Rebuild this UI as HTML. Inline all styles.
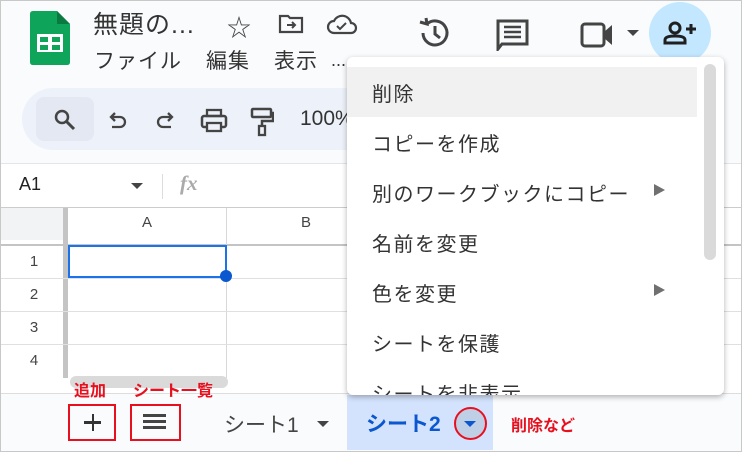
<!DOCTYPE html>
<html><head><meta charset="utf-8"><style>
*{margin:0;padding:0;box-sizing:border-box}
body{width:742px;height:452px;overflow:hidden;position:relative;background:#f9fbfd;font-family:"Liberation Sans","Noto Sans CJK JP",sans-serif;color:#444}
.a{position:absolute}
.frame{left:0;top:0;width:742px;height:452px;border:1px solid #c8c8c8;z-index:50;pointer-events:none}
.mi{position:absolute;left:25px;font-size:20px;letter-spacing:1.5px;color:#333}
.arr{position:absolute;left:307px;width:0;height:0;border-left:11px solid #707070;border-top:6px solid transparent;border-bottom:6px solid transparent}
.rh{position:absolute;left:0;width:68px;text-align:center;font-size:15px;color:#444}
.red{color:#e8101e;font-weight:bold;font-size:16px}
</style></head><body>
<div class="a frame"></div>
<svg class="a" style="left:30px;top:11px" width="40" height="54" viewBox="0 0 40 54"><path d="M3 0H27L40 13V51Q40 54 37 54H3Q0 54 0 51V3Q0 0 3 0Z" fill="#0ea45a"/><path d="M27 0V13H40Z" fill="#0a7a40"/><rect x="7" y="23" width="26" height="18" fill="#fff"/><rect x="10" y="26" width="8" height="5" fill="#0ea45a"/><rect x="22" y="26" width="8" height="5" fill="#0ea45a"/><rect x="10" y="34" width="8" height="5" fill="#0ea45a"/><rect x="22" y="34" width="8" height="5" fill="#0ea45a"/></svg>
<div class="a" style="left:93px;top:5px;font-size:25px;letter-spacing:1px;color:#333">無題の...</div>
<div class="a" style="left:94px;top:45px;font-size:21px;letter-spacing:1px;color:#333">ファイル</div>
<div class="a" style="left:206px;top:45px;font-size:21px;letter-spacing:1px;color:#333">編集</div>
<div class="a" style="left:274px;top:45px;font-size:21px;letter-spacing:1px;color:#333">表示</div>
<div class="a" style="left:331px;top:50px;font-size:18px;color:#333">...</div>
<div class="a" style="left:227px;top:8px;font-size:24px;color:#444">☆</div>
<svg class="a" style="left:278px;top:14px" width="26" height="20" viewBox="0 0 26 20"><path d="M2 2H10L12 4H24V18H2Z" fill="none" stroke="#444" stroke-width="2.2"/><path d="M9 11H17M14 8L17 11L14 14" fill="none" stroke="#444" stroke-width="2"/></svg>
<svg class="a" style="left:326px;top:13px" width="32" height="22" viewBox="0 0 32 22"><path d="M8 20H25A5 5 0 0 0 25 10A9 9 0 0 0 8 8A6 6 0 0 0 8 20Z" fill="none" stroke="#444" stroke-width="2.2"/><path d="M11 13L14 16L20 10" fill="none" stroke="#444" stroke-width="2"/></svg>
<svg class="a" style="left:417px;top:15px" width="36" height="36" viewBox="0 0 36 36"><path d="M6 18A12 12 0 1 0 10 9" fill="none" stroke="#444" stroke-width="3"/><path d="M3 7L10 9L9 3" fill="none" stroke="#444" stroke-width="3"/><path d="M18 11V19L23 23" fill="none" stroke="#444" stroke-width="3"/></svg>
<svg class="a" style="left:496px;top:19px" width="34" height="32" viewBox="0 0 34 32"><path d="M2 2H31V25H6L2 30Z" fill="none" stroke="#444" stroke-width="3"/><path d="M8 8H25M8 13H25M8 18H25" stroke="#444" stroke-width="2.5"/></svg>
<svg class="a" style="left:580px;top:22px" width="34" height="26" viewBox="0 0 34 26"><rect x="2" y="2" width="22" height="22" rx="3" fill="none" stroke="#444" stroke-width="3"/><path d="M24 10L32 3V23L24 16Z" fill="#444"/></svg>
<div class="a" style="left:627px;top:30px;border-left:6px solid transparent;border-right:6px solid transparent;border-top:6px solid #444"></div>
<div class="a" style="left:649px;top:2px;width:62px;height:62px;border-radius:50%;background:#c2e7ff"></div>
<svg class="a" style="left:663px;top:20px" width="34" height="26" viewBox="0 0 34 26"><circle cx="12" cy="8" r="5" fill="none" stroke="#1f1f1f" stroke-width="3"/><path d="M2 23V20Q2 16 12 16Q22 16 22 20V23Z" fill="none" stroke="#1f1f1f" stroke-width="3"/><path d="M23 9H33M28 4V14" stroke="#1f1f1f" stroke-width="3"/></svg>
<div class="a" style="left:22px;top:88px;width:360px;height:62px;border-radius:31px;background:#edf2fa"></div>
<div class="a" style="left:36px;top:97px;width:58px;height:44px;border-radius:8px;background:#e3e8f2"></div>
<svg class="a" style="left:53px;top:108px" width="24" height="24" viewBox="0 0 24 24"><circle cx="9" cy="9" r="6" fill="none" stroke="#444" stroke-width="2.5"/><path d="M13 13L21 21" stroke="#444" stroke-width="3"/></svg>
<svg class="a" style="left:106px;top:110px" width="22" height="22" viewBox="0 0 22 22"><path d="M6 7H14A5 5 0 0 1 14 17H6" fill="none" stroke="#444" stroke-width="2.3"/><path d="M9 3L5 7L9 11" fill="none" stroke="#444" stroke-width="2.3"/></svg>
<svg class="a" style="left:155px;top:110px" width="22" height="22" viewBox="0 0 22 22"><path d="M16 7H8A5 5 0 0 0 8 17H16" fill="none" stroke="#444" stroke-width="2.3"/><path d="M13 3L17 7L13 11" fill="none" stroke="#444" stroke-width="2.3"/></svg>
<svg class="a" style="left:200px;top:107px" width="28" height="28" viewBox="0 0 28 28"><rect x="2" y="9" width="24" height="11" rx="2" fill="none" stroke="#444" stroke-width="2.5"/><rect x="7" y="3" width="14" height="6" fill="none" stroke="#444" stroke-width="2.3"/><rect x="7" y="16" width="14" height="8" fill="#edf2fa" stroke="#444" stroke-width="2.3"/></svg>
<svg class="a" style="left:250px;top:107px" width="24" height="30" viewBox="0 0 24 30"><rect x="2" y="2" width="19" height="8" rx="1" fill="none" stroke="#444" stroke-width="2.5"/><path d="M21 6H23V14H12V20" fill="none" stroke="#444" stroke-width="2.5"/><rect x="9" y="19" width="6" height="9" fill="none" stroke="#444" stroke-width="2.3"/></svg>
<div class="a" style="left:300px;top:107px;font-size:21px;color:#333">100%</div>
<div class="a" style="left:0;top:163px;width:742px;height:44px;background:#fff;border-top:1px solid #e5e5e5"></div>
<div class="a" style="left:19px;top:174px;font-size:18px;color:#222">A1</div>
<div class="a" style="left:131px;top:183px;border-left:6px solid transparent;border-right:6px solid transparent;border-top:6px solid #444"></div>
<div class="a" style="left:162px;top:174px;width:1px;height:25px;background:#ddd"></div>
<div class="a" style="left:180px;top:171px;font-size:21px;color:#aaa;font-style:italic;font-family:'Liberation Serif',serif;font-weight:bold">fx</div>
<div class="a" style="left:0;top:207px;width:742px;height:186px;background:#fff;border-top:1px solid #ccc"></div>
<div class="a" style="left:0;top:208px;width:63px;height:32px;background:#f1f3f4"></div>
<div class="a" style="left:63px;top:208px;width:5px;height:170px;background:#c4c4c4"></div>
<div class="a" style="left:0;top:244px;width:742px;height:2px;background:#c4c4c4"></div>
<div class="a" style="left:226px;top:208px;width:1px;height:170px;background:#d8d8d8"></div>
<div class="a" style="left:68px;top:214px;width:158px;text-align:center;font-size:15px;color:#444">A</div>
<div class="a" style="left:227px;top:214px;width:158px;text-align:center;font-size:15px;color:#444">B</div>
<div class="a" style="left:0;top:278px;width:742px;height:1px;background:#e0e0e0"></div>
<div class="a" style="left:0;top:311px;width:742px;height:1px;background:#e0e0e0"></div>
<div class="a" style="left:0;top:344px;width:742px;height:1px;background:#e0e0e0"></div>
<div class="rh" style="top:253px">1</div><div class="rh" style="top:286px">2</div><div class="rh" style="top:319px">3</div><div class="rh" style="top:352px">4</div>
<div class="a" style="left:68px;top:245px;width:159px;height:33px;border:2px solid #1a73e8"></div>
<div class="a" style="left:220px;top:270px;width:12px;height:12px;border-radius:50%;background:#0b57d0"></div>
<div class="a" style="left:70px;top:376px;width:158px;height:12px;border-radius:6px;background:#dadada"></div>
<div class="a" style="left:0;top:393px;width:742px;height:59px;background:#f9fbfd;border-top:1px solid #ddd"></div>
<div class="a red" style="left:74px;top:377px">追加</div>
<div class="a red" style="left:133px;top:377px">シート一覧</div>
<div class="a" style="left:68px;top:404px;width:48px;height:37px;border:2px solid #e8101e"></div>
<div class="a" style="left:84px;top:421px;width:17px;height:2.5px;background:#333"></div>
<div class="a" style="left:91.5px;top:414px;width:2.5px;height:17px;background:#333"></div>
<div class="a" style="left:130px;top:404px;width:51px;height:37px;border:2px solid #e8101e"></div>
<div class="a" style="left:143px;top:414px;width:23px;height:2.5px;background:#444;box-shadow:0 6px 0 #444,0 12px 0 #444"></div>
<div class="a" style="left:224px;top:409px;font-size:21px;color:#444">シート1</div>
<div class="a" style="left:317px;top:421px;border-left:6px solid transparent;border-right:6px solid transparent;border-top:6px solid #444"></div>
<div class="a" style="left:347px;top:395px;width:146px;height:55px;background:#d3e3fd"></div>
<div class="a" style="left:366px;top:408px;font-size:21px;font-weight:bold;color:#0b57d0">シート2</div>
<div class="a" style="left:454px;top:407px;width:33px;height:33px;border-radius:50%;border:2px solid #e8101e;background:#bfcfe6"></div>
<div class="a" style="left:464px;top:421px;border-left:6px solid transparent;border-right:6px solid transparent;border-top:6px solid #0b57d0"></div>
<div class="a red" style="left:511px;top:412px">削除など</div>
<div class="a" style="left:347px;top:57px;width:377px;height:338px;background:#fff;border-radius:6px;box-shadow:0 2px 6px rgba(0,0,0,.3);overflow:hidden">
<div class="a" style="left:0;top:10px;width:350px;height:50px;background:#f1f1f1"></div>
<div class="mi" style="top:21px">削除</div>
<div class="mi" style="top:71px">コピーを作成</div>
<div class="mi" style="top:121px">別のワークブックにコピー</div><div class="arr" style="top:127px"></div>
<div class="mi" style="top:171px">名前を変更</div>
<div class="mi" style="top:221px">色を変更</div><div class="arr" style="top:227px"></div>
<div class="mi" style="top:271px">シートを保護</div>
<div class="mi" style="top:321px">シートを非表示</div>
<div class="a" style="left:357px;top:7px;width:12px;height:196px;border-radius:6px;background:#dadada"></div>
</div>
</body></html>
